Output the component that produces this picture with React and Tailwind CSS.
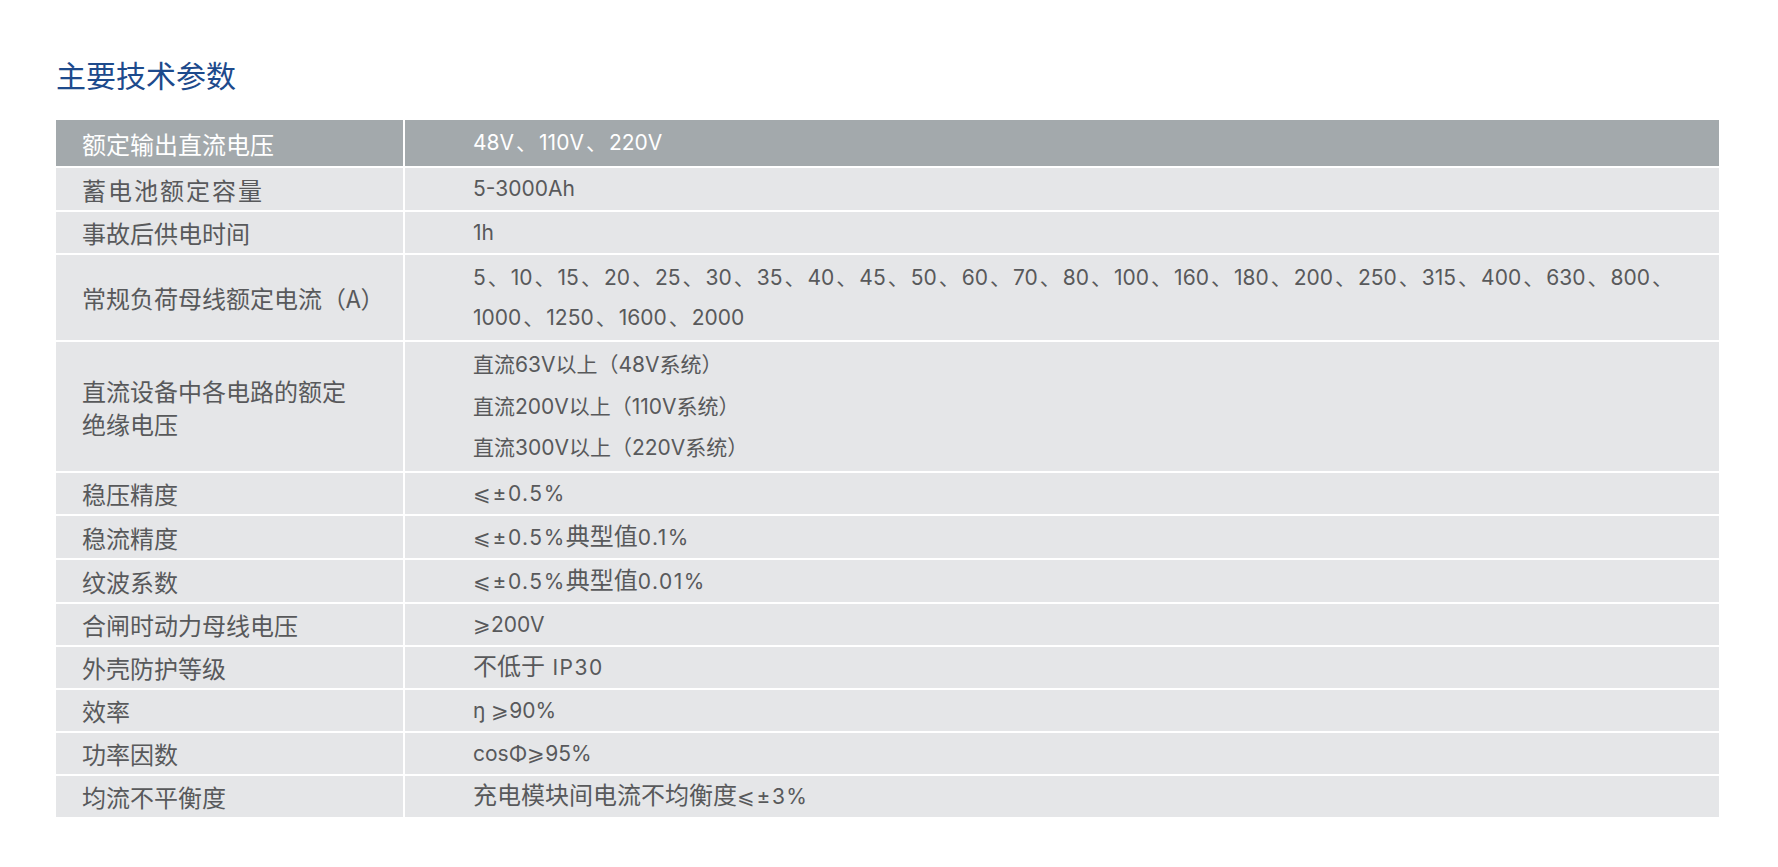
const rows = [
  { label: ["蓄电池额定容量"], value: ["5-3000Ah"], h: "h-[42px]", wide: true },
  { label: ["事故后供电时间"], value: ["1h"], h: "h-[41px]" },
  {
    label: ["常规负荷母线额定电流（A）"],
    value: [
      "5、10、15、20、25、30、35、40、45、50、60、70、80、100、160、180、200、250、315、400、630、800、",
      "1000、1250、1600、2000",
    ],
    h: "h-[85px]",
  },
  {
    label: ["直流设备中各电路的额定", "绝缘电压"],
    value: ["直流63V以上（48V系统）", "直流200V以上（110V系统）", "直流300V以上（220V系统）"],
    h: "h-[129px]",
  },
  { label: ["稳压精度"], value: ["⩽±0.5%"], h: "h-[41px]", big: true },
  { label: ["稳流精度"], value: ["⩽±0.5%典型值0.1%"], h: "h-[42px]", big: true },
  { label: ["纹波系数"], value: ["⩽±0.5%典型值0.01%"], h: "h-[42px]", big: true },
  { label: ["合闸时动力母线电压"], value: ["⩾200V"], h: "h-[41px]" },
  { label: ["外壳防护等级"], value: ["不低于 IP30"], h: "h-[41px]", big: true },
  { label: ["效率"], value: ["ŋ ⩾90%"], h: "h-[41px]" },
  { label: ["功率因数"], value: ["cosΦ⩾95%"], h: "h-[41px]" },
  { label: ["均流不平衡度"], value: ["充电模块间电流不均衡度⩽±3%"], h: "h-[41px]", big: true },
];

// the list separator sits a little looser in the source
function Spaced({ text }) {
  const parts = text.split("、");
  return parts.map((p, i) => (
    <span key={i}>
      {p}
      {i < parts.length - 1 && <span className="px-[2px]">、</span>}
    </span>
  ));
}

// some rows set their Chinese a size up and the numbers a bit looser
function Big({ text }) {
  const parts = text.split(/([\u4e00-\u9fff]+)/).filter(Boolean);
  return parts.map((p, i) =>
    /[\u4e00-\u9fff]/.test(p) ? (
      <span key={i} className="text-[24px]">{p}</span>
    ) : (
      <span key={i} className="tracking-[1.5px]">{p}</span>
    )
  );
}

function Row({ label, value, h, head, wide, big }) {
  const bg = head ? "bg-[#a3a9ac] text-white" : "bg-[#e5e6e8] text-[#58595b]";
  return (
    <div className={`flex gap-[2px] ${h}`}>
      <div
        className={`w-[347px] shrink-0 flex flex-col justify-center pl-[26px] text-[24px] leading-[33px] ${
          wide ? "tracking-[2px]" : ""
        } ${bg}`}
      >
        {label.map((l) => (
          <div key={l} className="whitespace-nowrap">{l}</div>
        ))}
      </div>
      <div
        className={`flex-1 flex flex-col justify-center pl-[68px] text-[21px] ${
          value.length > 2 ? "leading-[41.5px]" : "leading-[40px]"
        } ${bg}`}
        style={{ fontFamily: 'Inter, "Noto Sans CJK SC", sans-serif' }}
      >
        {value.map((v) => (
          <div key={v} className="whitespace-nowrap">
            {big ? <Big text={v} /> : <Spaced text={v} />}
          </div>
        ))}
      </div>
    </div>
  );
}

export default function App() {
  return (
    <div
      className="w-[1778px] h-[867px] bg-white pl-[56px] pr-[59px] pt-[56px]"
      style={{ fontFamily: '"Noto Sans CJK SC", "Noto Sans", sans-serif' }}
    >
      <h1 className="text-[30px] leading-[36px] text-[#1d4a8c] font-normal">主要技术参数</h1>
      <div className="mt-[28px] flex flex-col gap-[2px]">
        <Row head label={["额定输出直流电压"]} value={["48V、110V、220V"]} h="h-[46px]" />
        {rows.map((r) => (
          <Row key={r.label[0]} {...r} />
        ))}
      </div>
    </div>
  );
}
